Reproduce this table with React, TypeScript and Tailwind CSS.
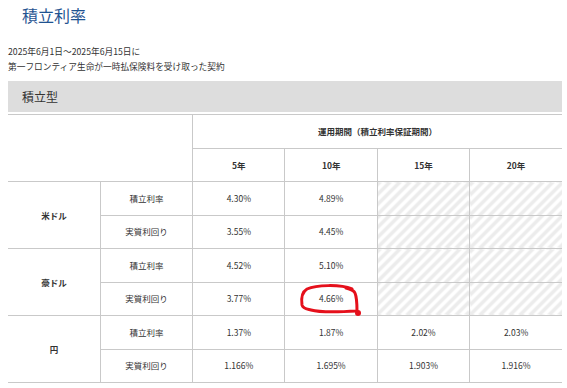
import React from 'react';

type Row = { label: string; values: (string | null)[] };
type Group = { currency: string; rows: Row[] };

const groups: Group[] = [
  {
    currency: '米ドル',
    rows: [
      { label: '積立利率', values: ['4.30%', '4.89%', null, null] },
      { label: '実質利回り', values: ['3.55%', '4.45%', null, null] },
    ],
  },
  {
    currency: '豪ドル',
    rows: [
      { label: '積立利率', values: ['4.52%', '5.10%', null, null] },
      { label: '実質利回り', values: ['3.77%', '4.66%', null, null] },
    ],
  },
  {
    currency: '円',
    rows: [
      { label: '積立利率', values: ['1.37%', '1.87%', '2.02%', '2.03%'] },
      { label: '実質利回り', values: ['1.166%', '1.695%', '1.903%', '1.916%'] },
    ],
  },
];

const periods = ['5年', '10年', '15年', '20年'];

const cell = 'border-[#c9c9c9] text-center align-middle p-0';
const hatch =
  'bg-[repeating-linear-gradient(135deg,#ececec_0px,#ececec_3.5px,#ffffff_3.5px,#ffffff_7px)]';

const App: React.FC = () => {
  return (
    <div className="relative w-[567px] h-[388px] overflow-hidden bg-white text-[#333] font-['Noto_Sans_CJK_JP','Noto_Sans',sans-serif]">
      <div className="pt-[7px] pl-[22px] text-[16px] leading-[16px] text-[#1f5391]">積立利率</div>

      <div className="mt-[22px] pl-[8px] text-[8.7px] leading-[14.5px]">
        <p>2025年6月1日～2025年6月15日に</p>
        <p>第一フロンティア生命が一時払保険料を受け取った契約</p>
      </div>

      <div className="mt-[7px] ml-[8px] w-[554px] h-[31px] bg-[#dddddd] flex items-center pl-[14px] text-[12px]">
        積立型
      </div>

      <table className="mt-[2px] ml-[8px] w-[554px] table-fixed border-collapse border-t border-[#c9c9c9] text-[8.5px]">
        <colgroup>
          {[0, 1, 2, 3, 4, 5].map((i) => (
            <col key={i} className="w-[92.3px]" />
          ))}
        </colgroup>
        <thead>
          <tr className="h-[34px]">
            <td colSpan={2} rowSpan={2} className={`${cell} border-r border-b`} />
            <th colSpan={4} className={`${cell} border-b font-bold`}>
              運用期間（積立利率保証期間）
            </th>
          </tr>
          <tr className="h-[33px]">
            {periods.map((p, i) => (
              <th key={p} className={`${cell} border-b font-bold ${i < 3 ? 'border-r' : ''}`}>
                {p}
              </th>
            ))}
          </tr>
        </thead>
        <tbody>
          {groups.map((g) =>
            g.rows.map((r, ri) => (
              <tr key={g.currency + r.label} className="h-[33.5px]">
                {ri === 0 && (
                  <td rowSpan={2} className={`${cell} border-r border-b font-bold`}>
                    {g.currency}
                  </td>
                )}
                <td className={`${cell} border-r border-b`}>{r.label}</td>
                {r.values.map((v, vi) => (
                  <td
                    key={vi}
                    className={`${cell} border-b ${vi < 3 ? 'border-r' : ''} ${v === null ? hatch : ''}`}
                  >
                    {v}
                  </td>
                ))}
              </tr>
            ))
          )}
        </tbody>
      </table>

      {/* hand-drawn red mark */}
      <svg className="absolute left-0 top-0 pointer-events-none" width="567" height="388">
        <path
          d="M 352 289 C 340 284, 316 285, 307 289 C 302 292, 301 298, 302 305 C 303 309, 307 309, 311 310 C 318 312, 340 312, 357 311 C 357 305, 357 298, 355 293 C 354 290, 350 289, 346 288"
          fill="none"
          stroke="#e5101b"
          strokeWidth="3"
          strokeLinecap="round"
          strokeLinejoin="round"
        />
        <circle cx="358" cy="313" r="3" fill="#e5101b" />
      </svg>
    </div>
  );
};

export default App;
